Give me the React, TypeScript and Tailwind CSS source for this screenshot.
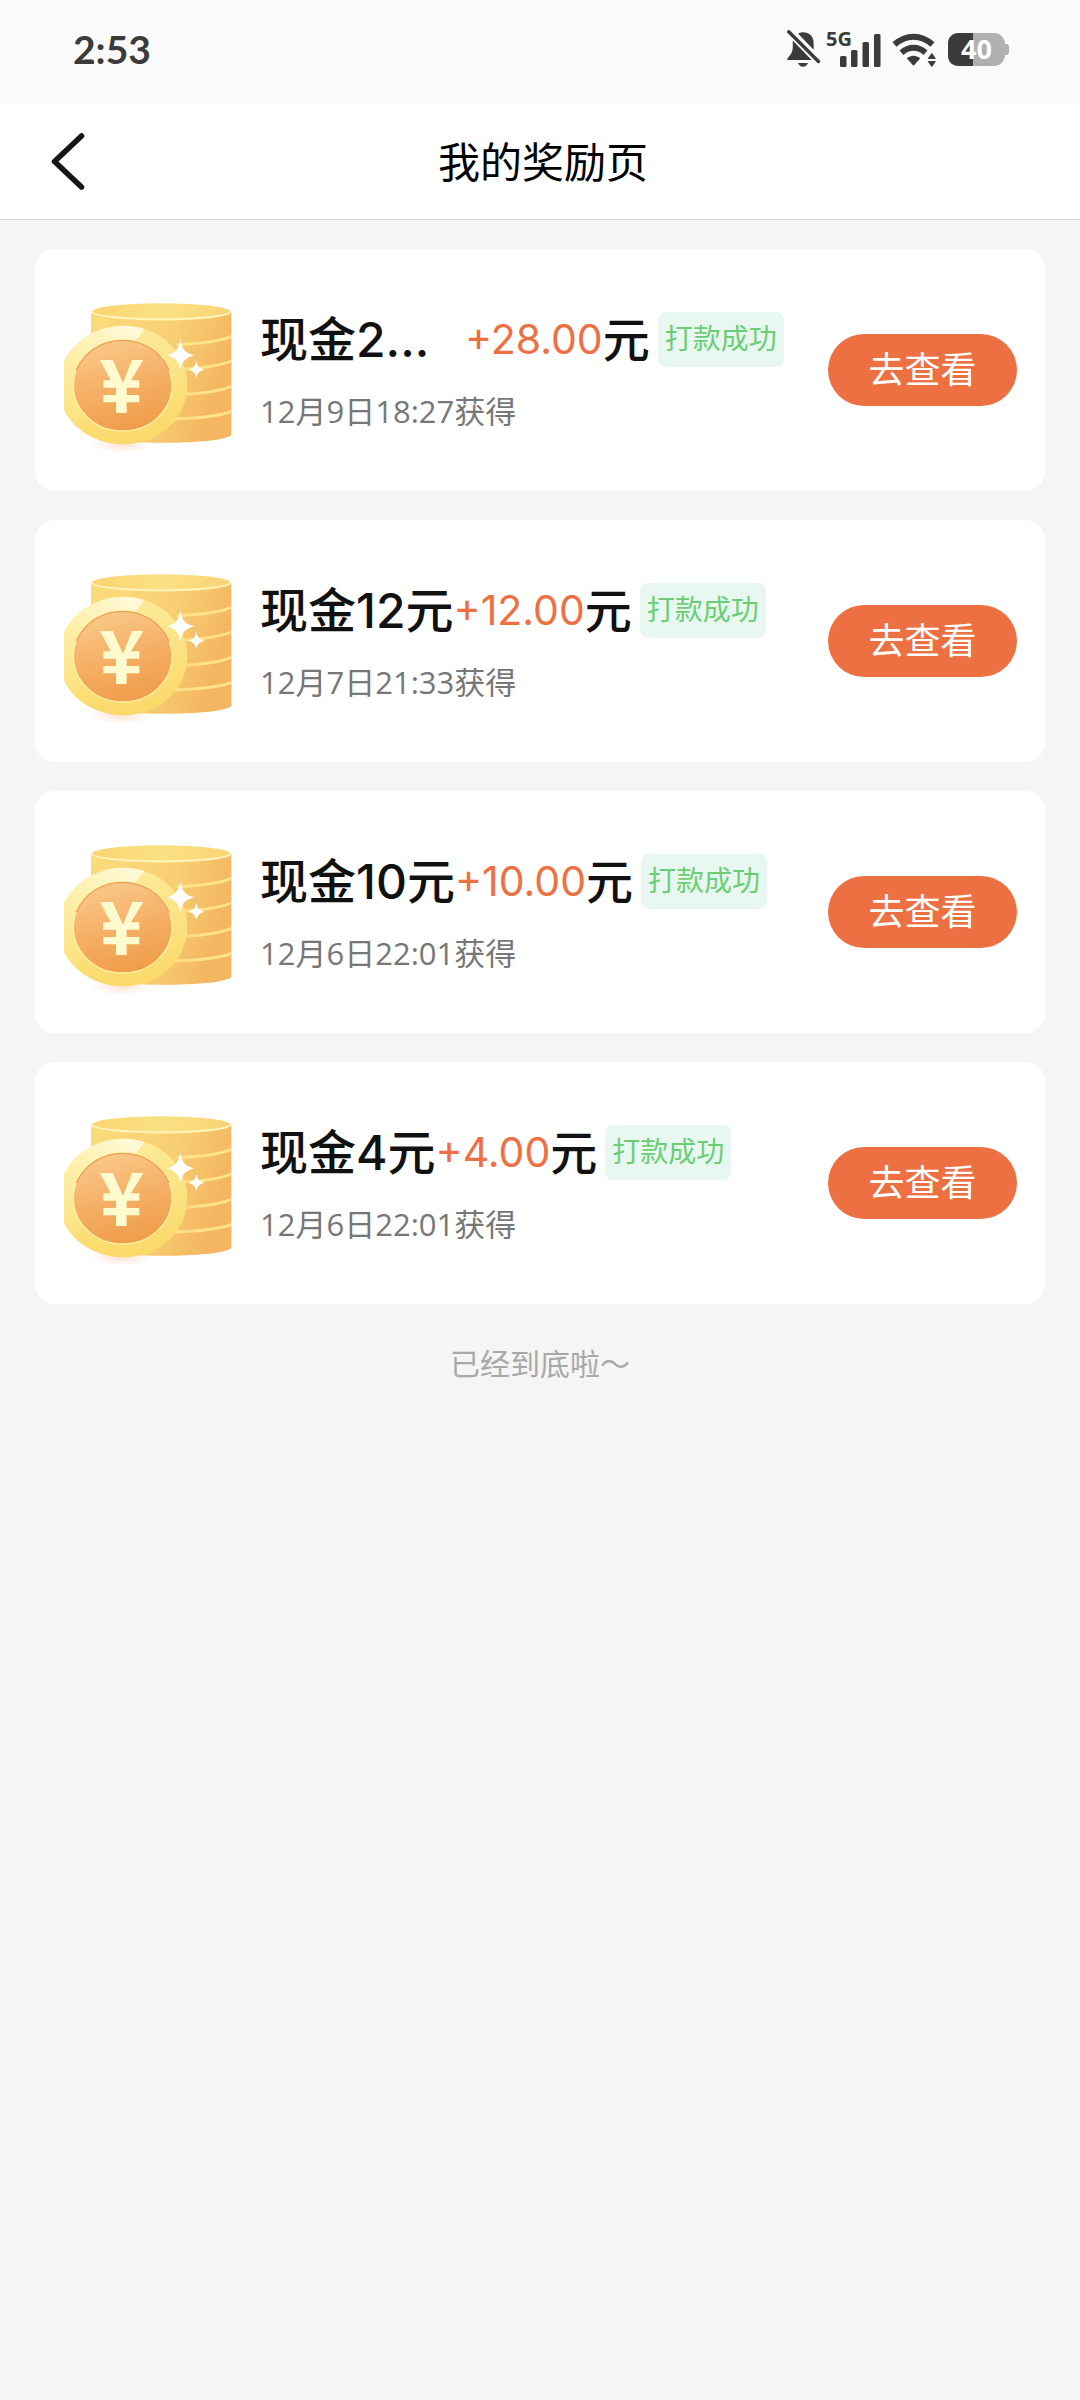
import React from "react";

interface Reward {
  id: number;
  title: string;
  truncated?: boolean;
  amount: string;
  time: string;
}

const rewards: Reward[] = [
  { id: 1, title: "现金2...", truncated: true, amount: "+28.00", time: "12月9日18:27获得" },
  { id: 2, title: "现金12元", amount: "+12.00", time: "12月7日21:33获得" },
  { id: 3, title: "现金10元", amount: "+10.00", time: "12月6日22:01获得" },
  { id: 4, title: "现金4元", amount: "+4.00", time: "12月6日22:01获得" },
];

function BellOffIcon() {
  return (
    <svg className="h-[38px] w-[34px]" viewBox="0 0 34 38" fill="#3b3b3b" aria-hidden="true">
      <path d="M16 2.2c6.4 0 10.6 4.6 10.6 10.600v7L11.200 3.700c1.400-1 3-1.500 4.800-1.500z" />
      <path d="M5.800 10.200 24.600 30H.9c-.8 0-1-.8-.5-1.400 3.800-4.200 5.400-7 5.400-12z" />
      <path d="M11 33h10c-1 2.400-2.700 3.800-5 3.800S12 35.400 11 33z" />
      <path d="M1.800 2 31.500 31.500" stroke="#fafafa" strokeWidth="6.500" />
      <path d="M1.800 1.800 31.500 31.500" stroke="#3b3b3b" strokeWidth="3.400" strokeLinecap="round" />
    </svg>
  );
}

function SignalIcon() {
  return (
    <svg className="h-12 w-14" viewBox="0 -5 56 48" fill="#3b3b3b" role="img" aria-label="5G">
      <text x="0" y="16" fontSize="20" fontWeight="700" fontFamily="'Open Sans', sans-serif">
        5G
      </text>
      <rect x="14" y="26" width="6.500" height="11" rx="1.500" />
      <rect x="25" y="20" width="6.500" height="17" rx="1.500" />
      <rect x="36.500" y="12" width="6.500" height="25" rx="1.500" />
      <rect x="48" y="4" width="6.500" height="33" rx="1.500" />
    </svg>
  );
}

function WifiIcon() {
  return (
    <svg className="h-[38px] w-[46px]" viewBox="0 0 46 38" aria-hidden="true">
      <g fill="none" stroke="#3b3b3b" strokeWidth="6">
        <path d="M2.500 14.500C14 4 29 4 40.500 14.500" />
        <path d="M9.500 22.800c7.200-6.600 16.800-6.600 24 0" />
      </g>
      <path d="M14.800 28.200c4.200-3.400 9.200-3.400 13.400 0L22.300 35c-.5.500-1.100.5-1.600 0z" fill="#3b3b3b" />
      <path d="M34 22h12v16h-12z" fill="#fafafa" />
      <path d="M39.800 23.500 43.300 28.500h-7zM39.800 36.500 36.300 31.500h7z" fill="#3b3b3b" stroke="#3b3b3b" strokeLinejoin="round" />
    </svg>
  );
}

function BatteryIcon() {
  return (
    <svg className="h-[38px] w-[62px]" viewBox="0 0 62 38" role="img" aria-label="40%">
      <path d="M56 14h2.500c1.500 0 2.500 1.500 2.500 3v5c0 1.500-1 3-2.500 3H56z" fill="#b0b0b0" />
      <rect x="0" y="3" width="57" height="33" rx="11" fill="#b0b0b0" />
      <path d="M25 3H11C4 3 0 7 0 14v11c0 7 4 11 11 11h14z" fill="#3b3b3b" />
      <text
        x="28.500"
        y="29"
        fill="#fff"
        fontSize="27"
        fontWeight="700"
        textAnchor="middle"
        fontFamily="'Open Sans', sans-serif"
      >
        40
      </text>
    </svg>
  );
}

function CoinDefs() {
  return (
    <svg className="absolute h-0 w-0" aria-hidden="true">
      <defs>
        <linearGradient id="stackSide" x1="0" y1="0" x2="1" y2="0.3">
          <stop offset="0" stopColor="#fbdc7a" />
          <stop offset="0.6" stopColor="#f8cf73" />
          <stop offset="1" stopColor="#f4b660" />
        </linearGradient>
        <linearGradient id="stackTop" x1="0" y1="0" x2="1" y2="0">
          <stop offset="0" stopColor="#fbd470" />
          <stop offset="0.5" stopColor="#fae184" />
          <stop offset="1" stopColor="#f9d374" />
        </linearGradient>
        <linearGradient id="coinRim" x1="0.4" y1="0" x2="0.6" y2="1">
          <stop offset="0" stopColor="#fdeb9c" />
          <stop offset="1" stopColor="#fbd968" />
        </linearGradient>
        <linearGradient id="coinShine" x1="0.8" y1="0" x2="0.1" y2="1">
          <stop offset="0" stopColor="#fff9d8" />
          <stop offset="1" stopColor="#fdf09d" stopOpacity="0.2" />
        </linearGradient>
        <linearGradient id="coinFace" x1="0.3" y1="0" x2="0.6" y2="1">
          <stop offset="0" stopColor="#f9c989" />
          <stop offset="0.5" stopColor="#f5b067" />
          <stop offset="1" stopColor="#ef9c48" />
        </linearGradient>
        <radialGradient id="coinShadow">
          <stop offset="0" stopColor="#f8b08a" stopOpacity="0.35" />
          <stop offset="1" stopColor="#f8b08a" stopOpacity="0" />
        </radialGradient>
      </defs>
    </svg>
  );
}

function CoinIcon() {
  return (
    <svg className="size-[168px] shrink-0" viewBox="42 18 504 504" aria-hidden="true">
      <ellipse cx="215" cy="494" rx="95" ry="25" fill="url(#coinShadow)" />
      <path d="M123 96v370c40 28 380 32 421 0V96z" fill="url(#stackSide)" />
      <g fill="none" stroke="#fee38b" strokeWidth="9">
        <path d="M380 194c70-3 130-10 164-25" />
        <path d="M380 268c70-3 130-10 164-25" />
        <path d="M380 344c70-3 130-10 164-25" />
        <path d="M370 417c80-3 140-8 174-23" />
      </g>
      <ellipse cx="333.500" cy="96" rx="209" ry="26" fill="url(#stackTop)" />
      <path d="M124 94c14 32 406 32 419 0" fill="none" stroke="#fff3b8" strokeWidth="6" />
      <path d="M380 200c40 60 40 170 0 240l55-20c20-60 15-150-10-220z" fill="#f7bd62" opacity="0.15" />
      <path
        d="M42 242C75 180 140 137 220 137c108 0 192 80 192 178s-84 178-192 178c-80 0-147-42-178-103z"
        fill="url(#coinRim)"
      />
      <path d="M42 242C75 180 140 137 220 137c22 0 43 3 63 10L75 430c-13-12-24-26-33-42z" fill="url(#coinShine)" />
      <ellipse cx="218" cy="316" rx="148" ry="137" fill="url(#coinFace)" stroke="#fff1a8" strokeWidth="4" />
      <path d="M79 270C104 215 155 181 218 181s114 34 139 89" fill="none" stroke="#e9a255" strokeWidth="4" />
      <path
        d="M150 240h38l31 68 27-68h34l-37 61h25v22h-38v22h38v22h-38v32h-32v-32h-38v-22h38v-22h-38v-22h22z"
        fill="#fffbcf"
      />
      <path d="M391 179c5 28 13 39 42 47-29 8-37 19-42 45-5-26-13-37-40-45 27-8 35-19 40-47z" fill="#fff" />
      <path d="M439 243c3 16 8 21 24 26-16 5-21 10-24 25-3-15-8-20-24-25 16-5 21-10 24-26z" fill="#fff" />
    </svg>
  );
}

function RewardCard({ reward }: { reward: Reward }) {
  return (
    <li className="flex items-center gap-7 rounded-[20px] bg-white py-[37px] pr-7 pl-[29px]">
      <CoinIcon />
      <div className="min-w-0 flex-1 pb-px">
        <div className="flex h-[55px] items-center font-['Inter','Noto_Sans_CJK_SC',sans-serif] whitespace-nowrap">
          <h2 className={`text-[48px] leading-[55px] font-medium text-[#111] ${reward.truncated ? "w-[205px]" : ""}`}>
            {reward.title}
          </h2>
          <span className="text-[41px] leading-[55px] text-[#ee7042]">{reward.amount}</span>
          <span className="text-[47px] leading-[55px] font-medium text-[#111]">元</span>
          <span className="ml-2 rounded-lg bg-[#e8f8f1] px-[7px] text-[28px] leading-[55px] text-[#6bce74]">
            打款成功
          </span>
        </div>
        <p className="mt-7 text-[31px] leading-8 text-[#777]">{reward.time}</p>
      </div>
      <button type="button" className="h-[72px] w-[189px] shrink-0 rounded-full bg-[#ed7042] text-[36px] text-white">
        去查看
      </button>
    </li>
  );
}

export default function App() {
  return (
    <div className="min-h-screen bg-[#f5f5f5] font-['Open_Sans','Noto_Sans_CJK_SC',sans-serif]">
      <CoinDefs />
      <div className="flex h-[104px] items-center justify-between bg-[#fafafa] pr-[70px] pb-[6px] pl-[73px] text-[#3b3b3b]">
        <span className="font-['Lato',sans-serif] text-[39px] leading-[48px] font-bold">2:53</span>
        <div className="flex items-center">
          <BellOffIcon />
          <div className="ml-[5px] flex items-center gap-2.5">
            <SignalIcon />
            <WifiIcon />
            <BatteryIcon />
          </div>
        </div>
      </div>

      <header className="grid h-[116px] grid-cols-[106px_1fr_100px] items-center border-b border-[#d8d8d8] bg-white">
        <button type="button" aria-label="返回" className="flex h-full items-center pl-[50px]">
          <svg className="h-[60px] w-9" viewBox="0 0 36 60" fill="none" aria-hidden="true">
            <path d="M31.500 4 4.500 29.500 31.500 55" stroke="#161616" strokeWidth="5.500" strokeLinecap="round" strokeLinejoin="round" />
          </svg>
        </button>
        <h1 className="text-center text-[42px] leading-[60px] text-black">我的奖励页</h1>
      </header>

      <main className="px-[35px] pt-[29px]">
        <ul className="flex flex-col gap-[29px]">
          {rewards.map((reward) => (
            <RewardCard key={reward.id} reward={reward} />
          ))}
        </ul>
        <p className="mt-9 text-center text-[30px] leading-[48px] text-[#a8a8a8]">已经到底啦～</p>
      </main>
    </div>
  );
}
